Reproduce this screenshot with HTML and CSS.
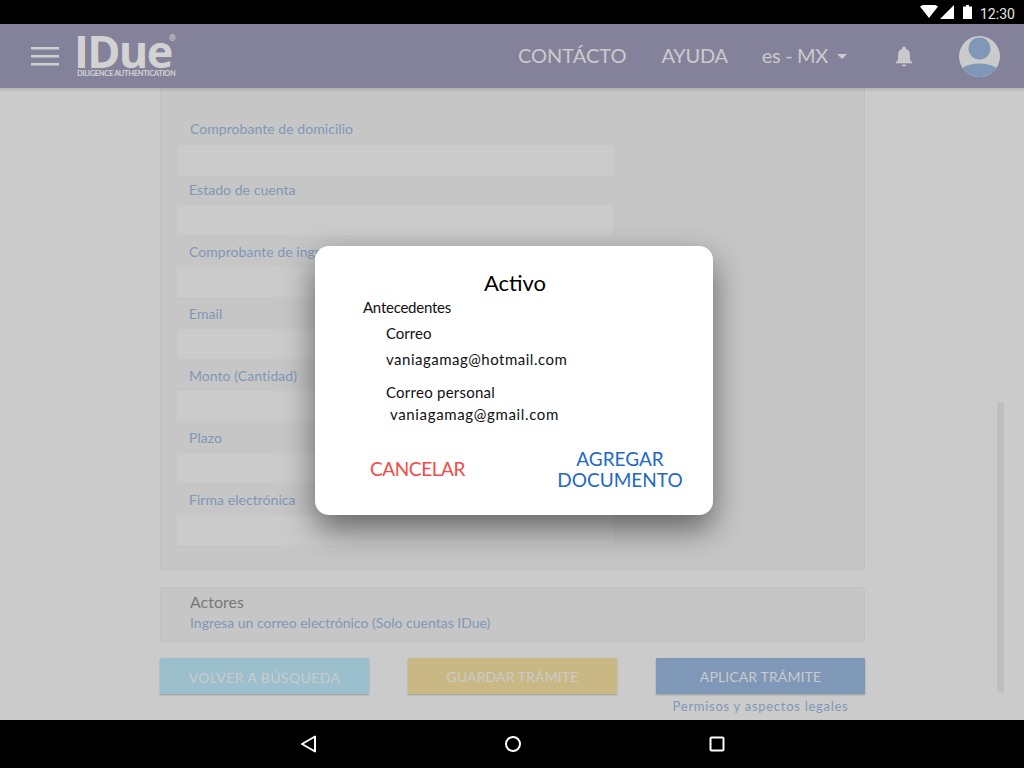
FILE: index.html
```html
<!DOCTYPE html>
<html lang="es">
<head>
<meta charset="utf-8">
<title>IDue</title>
<link rel="stylesheet" href="styles.css">
</head>
<body>
<div class="screen">
  <div class="status-bar">
    <svg class="st-wifi" width="18" height="14" viewBox="0 0 18 14"><path d="M0 1.500C2.500-.3 5.600-1 9-1s6.500.7 9 2.500L9 13z" fill="#fff"/></svg>
    <svg class="st-signal" width="14" height="14" viewBox="0 0 14 14"><path d="M14 0v14H0z" fill="#fff"/></svg>
    <svg class="st-batt" width="9" height="14" viewBox="0 0 9 14"><path d="M3 0h3v1.500h3V14H0V1.500h3z" fill="#fff"/></svg>
    <span class="st-time">12:30</span>
  </div>
  <header class="app-bar">
    <svg class="menu-icon" width="28" height="19" viewBox="0 0 28 19"><path d="M0 0h28v2.500H0zM0 8h28v2.500H0zM0 16h28v2.500H0z" fill="#d0d0d0"/></svg>
    <div class="logo">
      <div class="logo-word">IDue<span class="logo-r">®</span></div>
      <div class="logo-tag">DILIGENCE AUTHENTICATION</div>
    </div>
    <nav class="nav-links">
      <span class="nav-contact">CONTÁCTO</span>
      <span class="nav-help">AYUDA</span>
      <span class="nav-lang">es - MX</span>
      <svg class="caret" width="10" height="5" viewBox="0 0 10 5"><path d="M0 0h10L5 5z" fill="#cbcbcb"/></svg>
    </nav>
    <svg class="bell" width="20" height="22" viewBox="0 0 20 22"><path d="M10 1.500c1 0 1.700.7 1.700 1.700v.6c2.900.8 4.300 3.300 4.300 6.200v5l2 2.200v1H2v-1l2-2.200v-5c0-2.900 1.400-5.400 4.300-6.200v-.6c0-1 .7-1.700 1.700-1.700zM8 19.500h4c0 1.100-.9 2-2 2s-2-.9-2-2z" fill="#c9c9c9"/></svg>
    <svg class="avatar" width="41" height="41" viewBox="0 0 41 41"><circle cx="20.500" cy="20.500" r="20.500" fill="#cbcbcb"/><circle cx="20.500" cy="12.500" r="11" fill="#7f98b8"/><path d="M3.500 32c4-3 10-4.500 17-4.500s13 1.500 17 4.500c-3.700 5.500-10 9-17 9s-13.300-3.500-17-9z" fill="#7f98b8"/></svg>
  </header>
  <main class="content">
    <section class="doc-panel">
      <label class="f-label f1">Comprobante de domicilio</label><div class="f-input f-i1"></div>
      <label class="f-label">Estado de cuenta</label><div class="f-input"></div>
      <label class="f-label">Comprobante de ingresos</label><div class="f-input"></div>
      <label class="f-label">Email</label><div class="f-input"></div>
      <label class="f-label">Monto (Cantidad)</label><div class="f-input"></div>
      <label class="f-label">Plazo</label><div class="f-input"></div>
      <label class="f-label">Firma electrónica</label><div class="f-input"></div>
    </section>
    <section class="actors-panel">
      <div class="actors-title">Actores</div>
      <div class="actors-sub">Ingresa un correo electrónico (Solo cuentas IDue)</div>
    </section>
    <div class="actions">
      <div class="action"><button class="btn btn-back">VOLVER A BÚSQUEDA</button></div>
      <div class="action"><button class="btn btn-save">GUARDAR TRÁMITE</button></div>
      <div class="action"><button class="btn btn-apply">APLICAR TRÁMITE</button><div class="legal">Permisos y aspectos legales</div></div>
    </div>
    <div class="scrollbar"></div>
  </main>
  <div class="nav-bar">
    <svg width="17" height="18" viewBox="0 0 17 18"><path d="M15 1.500v15L2 9z" fill="none" stroke="#fff" stroke-width="2" stroke-linejoin="round"/></svg>
    <svg width="18" height="18" viewBox="0 0 18 18"><circle cx="9" cy="9" r="7" fill="none" stroke="#fff" stroke-width="2"/></svg>
    <svg width="16" height="16" viewBox="0 0 16 16"><rect x="1.500" y="1.500" width="13" height="13" rx="1" fill="none" stroke="#fff" stroke-width="2"/></svg>
  </div>
  <div class="dialog">
    <h2 class="d-title">Activo</h2>
    <div class="d-section">Antecedentes</div>
    <div class="d-line d-a">Correo</div>
    <div class="d-line d-b">vaniagamag@hotmail.com</div>
    <div class="d-line d-c">Correo personal</div>
    <div class="d-line d-d">vaniagamag@gmail.com</div>
    <div class="d-actions">
      <span class="d-cancel">CANCELAR</span>
      <span class="d-add">AGREGAR<br>DOCUMENTO</span>
    </div>
  </div>
</div>
</body>
</html>
```
FILE: styles.css
```css
* { box-sizing: border-box; }
html, body { margin: 0; padding: 0; }
body { font-family: "Lato", "Open Sans", sans-serif; background: #cbcbcb; }
.screen { position: relative; width: 1024px; height: 768px; overflow: hidden; display: flex; flex-direction: column; }

.status-bar { height: 24px; background: #000; display: flex; align-items: center; padding: 0 9px 0 0; justify-content: flex-end; flex: none; }
.st-wifi { margin-right: 2px; }
.st-signal { margin-right: 9px; }
.st-batt { margin-right: 8px; }
.st-time { font-family: "Roboto", sans-serif; font-size: 14px; line-height: 16px; padding-top: 3px; color: #e6e6e6; width: 35px; }

.app-bar { position: relative; z-index: 2; height: 64px; flex: none; background: #84829a; display: flex; align-items: center; padding-left: 31px; box-shadow: 0 2px 3px rgba(0,0,0,.12); }
.menu-icon { flex: none; margin-top: 1px; }
.logo { flex: none; margin-left: 18px; width: 110px; margin-top: -3px; color: #d2d2d2; }
.logo-word { font-family: "Open Sans", sans-serif; font-weight: 700; font-size: 45px; line-height: 38px; letter-spacing: -1.700px; margin-left: -3px; position: relative; }
.logo-r { position: absolute; left: 95px; top: 2px; font-size: 8px; line-height: 8px; letter-spacing: 0; }
.logo-tag { font-size: 7.500px; line-height: 8px; margin-top: 0; font-weight: 700; letter-spacing: -.33px; white-space: nowrap; }
.nav-links { display: flex; align-items: center; margin-left: 331px; color: #cbcbcb; font-size: 20px; flex: none; }
.nav-contact, .nav-help, .nav-lang { margin-top: -2px; }
.nav-help { margin-left: 35px; letter-spacing: -.3px; }
.nav-lang { margin-left: 34px; letter-spacing: -.3px; }
.caret { margin-left: 9px; }
.bell { margin-left: 47px; flex: none; }
.avatar { margin-left: 45px; flex: none; }

.content { position: relative; flex: 1; min-height: 0; padding-left: 160px; padding-right: 159px; background: #cbcbcb; }
.doc-panel { height: 482px; background: #c6c6c6; border: 1px solid #c0c0c0; border-top: 0; border-radius: 0 0 4px 4px; padding: 31px 0 0 16px; }
.f-label { display: block; height: 25px; margin-left: 12px; font-size: 14px; line-height: 20px; color: #7f98b8; letter-spacing: .05px; }
.f1 { height: 26px; margin-left: 13px; }
.f-input { width: 436px; height: 30px; margin-bottom: 7px; background: #cbcbcb; }
.f-i1 { margin-left: 1px; height: 31px; margin-bottom: 4px; }

.actors-panel { margin-top: 17px; height: 55px; background: #c6c6c6; border: 1px solid #c0c0c0; border-radius: 4px; padding: 4px 0 0 29px; }
.actors-title { font-size: 16px; line-height: 20px; margin-bottom: 1px; color: #777; }
.actors-sub { font-size: 14px; line-height: 20px; color: #7f98b8; }

.actions { margin-top: 16px; display: flex; justify-content: space-between; }
.action { width: 209px; }
.btn { display: block; width: 209px; height: 36px; border: 0; padding: 0; border-radius: 1px; font-family: inherit; font-size: 14px; letter-spacing: .12px; color: #cbcbcb; box-shadow: 0 1px 2px rgba(0,0,0,.25); }
.btn-back { background: #9bbfcc; letter-spacing: .4px; padding-top: 2px; }
.btn-save { background: #c9b884; }
.btn-apply { background: #7f98b8; }
.legal { margin-top: 3px; text-align: center; font-size: 13px; line-height: 18px; letter-spacing: .72px; color: #7f98b8; }

.scrollbar { position: absolute; left: 997px; top: 314px; width: 7px; height: 291px; border-radius: 4px; background: #bebebe; }

.nav-bar { height: 48px; flex: none; background: #000; position: relative; z-index: 2; display: flex; align-items: center; justify-content: center; gap: 187px; padding-left: 1px; }

.dialog { position: absolute; z-index: 3; left: 315px; top: 246px; width: 398px; height: 269px; background: #fff; border-radius: 14px; box-shadow: 0 14px 32px rgba(0,0,0,.5); padding-top: 24px; color: #111; }
.d-title { margin: 0; text-align: center; font-size: 22px; line-height: 26px; font-weight: 400; color: #000; padding-left: 2px; }
.d-section { margin: 1px 0 0 48px; font-size: 15px; line-height: 20px; letter-spacing: -.25px; }
.d-line { font-size: 15px; line-height: 20px; margin-left: 71px; }
.d-a { margin-top: 6px; }
.d-b { margin-top: 6px; letter-spacing: .5px; }
.d-c { margin-top: 13px; letter-spacing: .25px; }
.d-d { margin-top: 2px; margin-left: 75px; letter-spacing: .65px; }
.d-actions { margin-top: 24px; display: flex; align-items: center; font-size: 19px; line-height: 21px; }
.d-cancel { margin-left: 55px; color: #f44a4a; letter-spacing: -.4px; padding-bottom: 2px; }
.d-add { margin-left: auto; width: 150px; margin-right: 18px; text-align: center; color: #1f69c4; }
```
